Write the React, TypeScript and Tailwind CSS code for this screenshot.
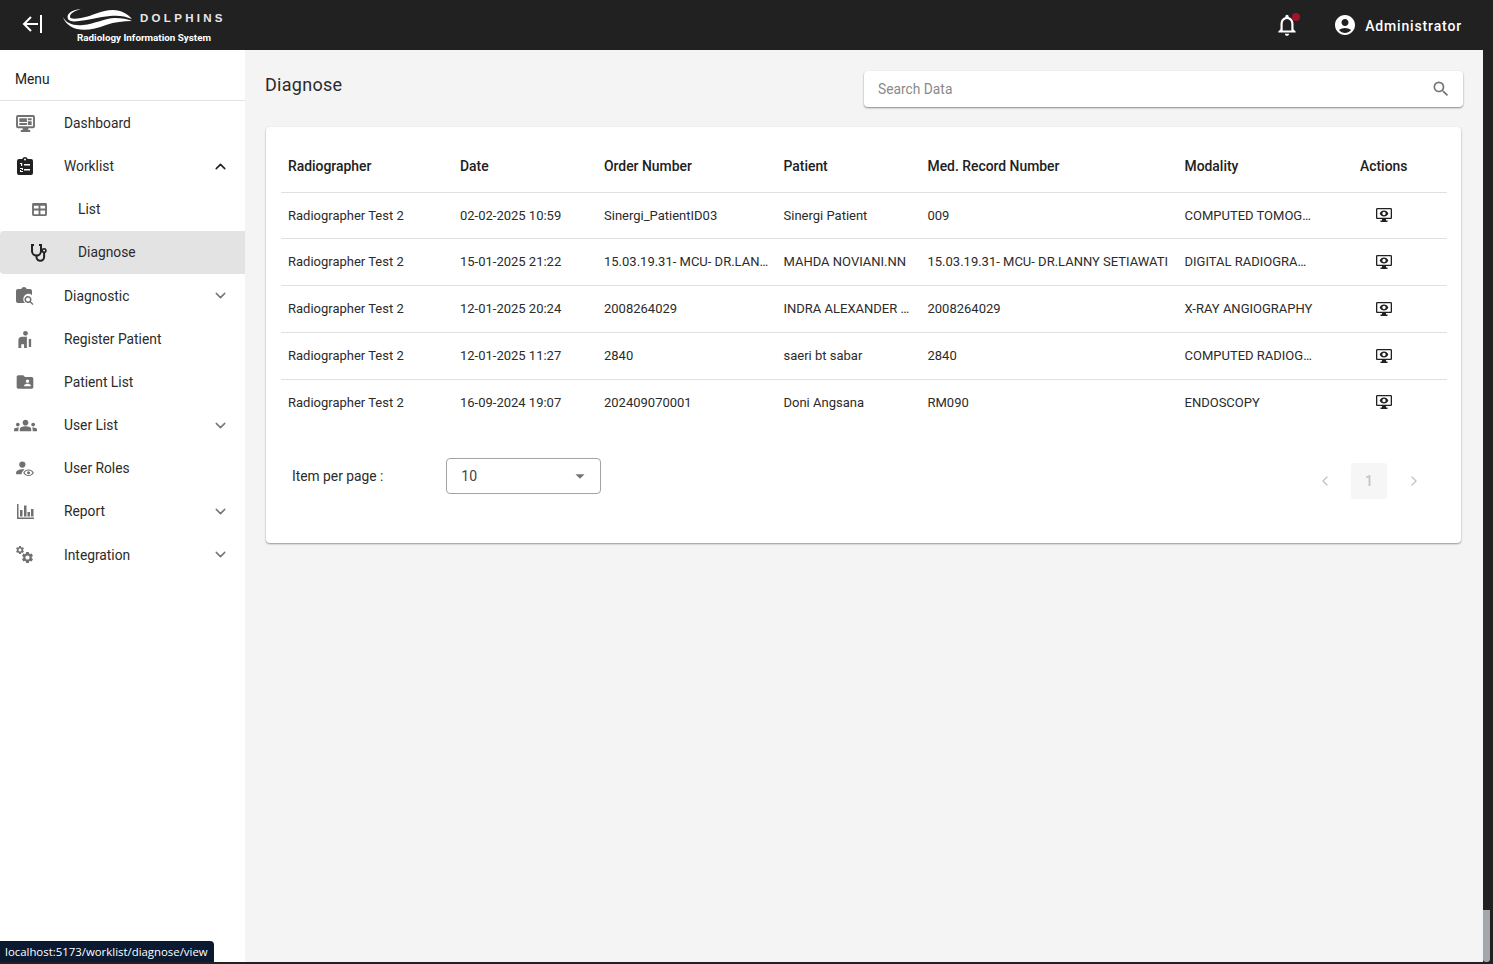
import { ChevronDown, ChevronLeft, ChevronRight, ChevronUp } from "lucide-react";
import {
  MdAccountCircle,
  MdArrowDropDown,
  MdFolderShared,
  MdGroups,
  MdNotificationsNone,
  MdSearch,
  MdSettings,
} from "react-icons/md";

type IconProps = { className?: string };

function DashboardIcon({ className }: IconProps) {
  return (
    <svg viewBox="0 0 20 18" className={className} fill="currentColor">
      <path d="M2 0h16a2 2 0 0 1 2 2v10a2 2 0 0 1-2 2h-5v2h2v2H5v-2h2v-2H2a2 2 0 0 1-2-2V2a2 2 0 0 1 2-2zm0 2v10h16V2H2z" />
      <path d="M3.500 3.500h8v4h-8zM12.500 3.500h4v2h-4zM12.500 6.500h4v4h-4zM3.500 8.500h8v2h-8z" />
    </svg>
  );
}

function WorklistIcon({ className }: IconProps) {
  return (
    <svg viewBox="0 0 16 18" className={className} fill="currentColor">
      <path
        fillRule="evenodd"
        d="M2 2h3.200a3 3 0 0 1 5.600 0H14a2 2 0 0 1 2 2v12a2 2 0 0 1-2 2H2a2 2 0 0 1-2-2V4a2 2 0 0 1 2-2zm6-.500a1 1 0 1 0 0 2 1 1 0 0 0 0-2zM3 6v1h1v2h1.200V6H3zm4 1v1.500h6V7H7zm-4 5h1.500a.500.500 0 0 1 0 1H3v2h3v-1H4.500a.500.500 0 0 1 0-1H6v-2H3v1zm4 0v1.500h6V12H7z"
      />
    </svg>
  );
}

function TableIcon({ className }: IconProps) {
  return (
    <svg viewBox="0 0 16 14" className={className} fill="currentColor">
      <path
        fillRule="evenodd"
        d="M1.500 0h13A1.500 1.500 0 0 1 16 1.500v11a1.500 1.500 0 0 1-1.500 1.500h-13A1.500 1.500 0 0 1 0 12.500v-11A1.500 1.500 0 0 1 1.500 0zM2 3v3h5V3H2zm7 0v3h5V3H9zM2 8v4h5V8H2zm7 0v4h5V8H9z"
      />
    </svg>
  );
}

function StethoscopeIcon({ className }: IconProps) {
  return (
    <svg viewBox="0 0 18 18" className={className} fill="none" stroke="currentColor" strokeWidth="2">
      <path d="M4 1H2v6a4.500 4.500 0 0 0 9 0V1H9" />
      <path d="M6.500 11.500V13a3.800 3.800 0 0 0 7.600 0V9" />
      <circle cx="14.100" cy="6.500" r="1.800" strokeWidth="1.600" />
    </svg>
  );
}

function DiagnosticIcon({ className }: IconProps) {
  return (
    <svg viewBox="0 0 18 18" className={className} fill="currentColor">
      <path d="M2 2h3.200a3 3 0 0 1 5.600 0H14a2 2 0 0 1 2 2v4.200a5 5 0 0 0-7 7.800H2a2 2 0 0 1-2-2V4a2 2 0 0 1 2-2z" />
      <path
        fillRule="evenodd"
        d="M12 9a3.500 3.500 0 0 1 2.900 5.400l2.600 2.600-1 1-2.600-2.600A3.500 3.500 0 1 1 12 9zm0 1.500a2 2 0 1 0 0 4 2 2 0 0 0 0-4z"
      />
    </svg>
  );
}

function RegisterIcon({ className }: IconProps) {
  return (
    <svg viewBox="0 0 14 18" className={className} fill="currentColor">
      <circle cx="7.500" cy="2.500" r="2.500" />
      <path d="M0 18v-8a4 4 0 0 1 4-4h5v12H6v-4H3v4zM11 8.500h2.500V17H11z" />
    </svg>
  );
}

function UserRolesIcon({ className }: IconProps) {
  return (
    <svg viewBox="0 0 20 18" className={className} fill="currentColor">
      <circle cx="7" cy="4" r="3.500" />
      <path d="M0 15v-2c0-2.200 3.500-3.800 7-3.800.900 0 1.800.100 2.600.300A8 8 0 0 0 6 15H0z" />
      <path
        fillRule="evenodd"
        d="M14 9.500c2.800 0 5 1.800 6 3.700-1 1.900-3.200 3.800-6 3.800s-5-1.900-6-3.800c1-1.900 3.200-3.700 6-3.700zm0 1.200c-1.900 0-3.500 1-4.400 2.500.900 1.500 2.500 2.600 4.400 2.600s3.500-1.100 4.400-2.600c-.900-1.500-2.500-2.500-4.400-2.500zm0 .800a1.700 1.700 0 1 1 0 3.400 1.700 1.700 0 0 1 0-3.400z"
      />
    </svg>
  );
}

function ReportIcon({ className }: IconProps) {
  return (
    <svg viewBox="0 0 17 15" className={className} fill="currentColor">
      <path d="M0 0h1.500v13.500H17V15H0z" />
      <path d="M3 6h2.500v6.500H3zM7 1.500h2.500v11H7zM10.500 8H13v4.500h-2.500zM14 5h2.500v7.500H14z" />
    </svg>
  );
}

function IntegrationIcon({ className }: IconProps) {
  return (
    <svg viewBox="0 0 18 18" className={className} fill="currentColor">
      <MdSettings x={-1} y={-1} size={10} />
      <MdSettings x={4.500} y={4.500} size={14} />
    </svg>
  );
}

function MonitorEyeIcon({ className }: IconProps) {
  return (
    <svg viewBox="0 0 16 14" className={className} fill="currentColor">
      <path
        fillRule="evenodd"
        d="M1.300 0h13.400C15.400 0 16 .600 16 1.300v8.400c0 .700-.600 1.300-1.300 1.300H10v1.500h1.500V14h-7v-1.500H6V11H1.300C.600 11 0 10.400 0 9.700V1.300C0 .600.600 0 1.300 0zm0 1.300v8.400h13.400V1.300H1.300z"
      />
      <path
        fillRule="evenodd"
        d="M8 2.500c2 0 3.600 1.300 4.300 3-.7 1.700-2.300 3-4.300 3s-3.600-1.300-4.300-3c.7-1.700 2.300-3 4.300-3zm0 1.300a1.700 1.700 0 1 0 0 3.400 1.700 1.700 0 0 0 0-3.400z"
      />
    </svg>
  );
}

function DolphinsLogo() {
  return (
    <div className="mt-[-2px] flex w-[162px] flex-col">
      <div className="flex h-[26px] items-end">
        <svg viewBox="0 0 70 22" className="h-[22px] w-[70px] shrink-0" fill="#fff">
          <path d="M5 10C3 5 8 1 18 0 12 2 7 4 7 8c0 2 5 2 11 1C30 7 38 1 50 1c8 0 15 4 19 9-7-3-14-4-22-3-11 1-21 4-31 5-6 1-10 0-11-2z" />
          <path d="M0 8c3 6 10 9 20 8 12-1 22-7 32-7 7 0 13 1 17 3-9 0-17 1-26 4-10 4-21 6-29 4C7 18 2 14 0 8z" />
        </svg>
        <span className="mb-[6px] ml-[7px] font-['Liberation_Sans',sans-serif] text-[11.500px] font-bold leading-none tracking-[3.300px] text-[#e8e8e8]">
          DOLPHINS
        </span>
      </div>
      <span className="mt-[1px] whitespace-nowrap pl-[14px] text-[9.850px] font-bold leading-[12px] text-white">
        Radiology Information System
      </span>
    </div>
  );
}

type NavItem = {
  label: string;
  icon: React.ReactNode;
  chevron?: "up" | "down";
  sub?: boolean;
  active?: boolean;
  dark?: boolean;
};

const iconClass = "h-[18px] w-[18px]";

const navItems: NavItem[] = [
  { label: "Dashboard", icon: <DashboardIcon className="h-[17px] w-[19px]" /> },
  { label: "Worklist", icon: <WorklistIcon className="h-[18px] w-[16px]" />, chevron: "up", dark: true },
  { label: "List", icon: <TableIcon className="h-[13px] w-[15px]" />, sub: true },
  { label: "Diagnose", icon: <StethoscopeIcon className={iconClass} />, sub: true, active: true, dark: true },
  { label: "Diagnostic", icon: <DiagnosticIcon className={iconClass} />, chevron: "down" },
  { label: "Register Patient", icon: <RegisterIcon className="h-[17px] w-[14px]" /> },
  { label: "Patient List", icon: <MdFolderShared className="h-[20px] w-[20px]" /> },
  { label: "User List", icon: <MdGroups className="h-[23px] w-[23px]" />, chevron: "down" },
  { label: "User Roles", icon: <UserRolesIcon className="h-[16px] w-[18px]" /> },
  { label: "Report", icon: <ReportIcon className="h-[15px] w-[17px]" />, chevron: "down" },
  { label: "Integration", icon: <IntegrationIcon className={iconClass} />, chevron: "down" },
];

const rows = [
  ["Radiographer Test 2", "02-02-2025 10:59", "Sinergi_PatientID03", "Sinergi Patient", "009", "COMPUTED TOMOGRAPHY"],
  ["Radiographer Test 2", "15-01-2025 21:22", "15.03.19.31- MCU- DR.LANNY SETIAWATI", "MAHDA NOVIANI.NN", "15.03.19.31- MCU- DR.LANNY SETIAWATI", "DIGITAL RADIOGRAPHY"],
  ["Radiographer Test 2", "12-01-2025 20:24", "2008264029", "INDRA ALEXANDER SAPUTRA", "2008264029", "X-RAY ANGIOGRAPHY"],
  ["Radiographer Test 2", "12-01-2025 11:27", "2840", "saeri bt sabar", "2840", "COMPUTED RADIOGRAPHY"],
  ["Radiographer Test 2", "16-09-2024 19:07", "202409070001", "Doni Angsana", "RM090", "ENDOSCOPY"],
];

const headers = ["Radiographer", "Date", "Order Number", "Patient", "Med. Record Number", "Modality"];

function Sidebar() {
  return (
    <aside className="flex w-[245px] shrink-0 flex-col bg-white">
      <div className="flex h-[51px] shrink-0 items-center border-b border-[#e2e2e2] pl-[15px] pt-[8px] text-[13.800px] text-[#212121]">
        Menu
      </div>
      <nav className="flex flex-col pt-[0.500px]">
        {navItems.map((item) => (
          <div
            key={item.label}
            className={
              item.active
                ? "flex h-[43.200px] items-center rounded-l-[4px] bg-[#e3e3e3] pr-[16px]"
                : "flex h-[43.200px] items-center pr-[16px]"
            }
          >
            <div
              className={
                (item.sub ? "ml-[27px] mr-[27px] " : "ml-[13px] mr-[27px] ") +
                (item.dark ? "flex w-[24px] justify-center text-[#212121]" : "flex w-[24px] justify-center text-[#707070]")
              }
            >
              {item.icon}
            </div>
            <span className="flex-1 text-[13.800px] text-[#2b2b2b]">{item.label}</span>
            {item.chevron === "up" && <ChevronUp className="h-[17px] w-[17px] text-[#212121]" strokeWidth={2.2} />}
            {item.chevron === "down" && <ChevronDown className="h-[17px] w-[17px] text-[#757575]" strokeWidth={2} />}
          </div>
        ))}
      </nav>
    </aside>
  );
}

function DataTable() {
  return (
    <table className="w-[1166px] table-fixed border-collapse text-left">
      <colgroup>
        <col className="w-[172px]" />
        <col className="w-[144px]" />
        <col className="w-[179.500px]" />
        <col className="w-[144px]" />
        <col className="w-[257px]" />
        <col className="w-[175.500px]" />
        <col className="w-[94px]" />
      </colgroup>
      <thead>
        <tr className="h-[65px] border-b border-[#e0e0e0]">
          {headers.map((h) => (
            <th key={h} className="whitespace-nowrap px-[7px] pt-[15px] text-[13.900px] font-medium text-[#212121]">
              {h}
            </th>
          ))}
          <th className="px-[7px] pt-[15px] text-[13.900px] font-medium text-[#212121]">Actions</th>
        </tr>
      </thead>
      <tbody>
        {rows.map((row, i) => (
          <tr key={row[1]} className={i < rows.length - 1 ? "h-[46.750px] border-b border-[#e0e0e0]" : "h-[46px]"}>
            {row.map((cell, j) => (
              <td
                key={j}
                className={
                  j === 5
                    ? "truncate pl-[7px] pr-[39px] text-[13px] text-[#2b2b2b]"
                    : "truncate px-[7px] text-[13px] text-[#2b2b2b]"
                }
              >
                {cell}
              </td>
            ))}
            <td className="px-[7px]">
              <div className="flex w-[48px] justify-center text-[#212121]">
                <MonitorEyeIcon className="h-[14px] w-[16px]" />
              </div>
            </td>
          </tr>
        ))}
      </tbody>
    </table>
  );
}

export default function App() {
  return (
    <div className="relative flex h-[964px] w-[1493px] overflow-hidden bg-[#212121] font-['Roboto',sans-serif]">
      <div className="flex h-[962px] w-[1483px] shrink-0 flex-col">
        {/* Top bar */}
        <header className="flex h-[50px] shrink-0 items-center bg-[#212121] pl-[22px] pr-[21px] text-white">
          <svg viewBox="0 0 20 20" className="mb-[2px] h-[20px] w-[20px]" fill="none" stroke="#fff" strokeWidth="2">
            <path d="M19 1v18M16 10H2M9 3l-7 7 7 7" />
          </svg>
          <div className="ml-[21px]">
            <DolphinsLogo />
          </div>
          <div className="ml-auto flex items-center">
            <div className="relative">
              <MdNotificationsNone className="h-[26px] w-[26px]" />
              <span className="absolute right-0 top-[1px] h-[8px] w-[8px] rounded-full bg-[#a11327]" />
            </div>
            <MdAccountCircle className="ml-[33px] h-[24px] w-[24px]" />
            <span className="ml-[8px] mt-[2px] text-[14px] font-medium tracking-[0.850px]">Administrator</span>
          </div>
        </header>

        <div className="flex min-h-0 flex-1">
          <Sidebar />
          <main className="flex-1 bg-[#f4f4f4] pl-[20px] pr-[20px]">
            <div className="flex h-[77px] items-start justify-between">
              <h1 className="mt-[23px] text-[18px] leading-[24px] tracking-[0.280px] text-[#2b2b2b]">Diagnose</h1>
              <div className="mt-[21px] flex h-[36px] w-[599px] items-center justify-between rounded-[4px] bg-white pl-[14px] pr-[12px] shadow-[0_1px_2px_rgba(0,0,0,0.45)]">
                <span className="text-[13.800px] text-[#8a8a8a]">Search Data</span>
                <MdSearch className="h-[20px] w-[20px] text-[#757575]" />
              </div>
            </div>

            <section className="ml-[1px] mr-[2px] h-[416px] rounded-[4px] bg-white pl-[15px] pr-[14px] shadow-[0_1px_2px_rgba(0,0,0,0.4)]">
              <DataTable />
              <div className="flex items-start">
                <span className="ml-[11px] mt-[41px] text-[13.800px] text-[#2b2b2b]">Item per page :</span>
                <div className="ml-[63px] mt-[33px] flex h-[36px] w-[155px] items-center justify-between rounded-[4px] border border-[#a3a3a3] pl-[14px] pr-[9px] text-[14px] text-[#444444]">
                  10
                  <MdArrowDropDown className="h-[22px] w-[22px] text-[#757575]" />
                </div>
                <div className="ml-auto mr-[25px] mt-[38px] flex items-center text-[#c4c4c4]">
                  <ChevronLeft className="h-[16px] w-[16px]" />
                  <span className="ml-[18px] mr-[19px] flex h-[36px] w-[36px] items-center justify-center rounded-[3px] bg-[#f6f6f6] text-[14px] font-medium">
                    1
                  </span>
                  <ChevronRight className="h-[16px] w-[16px]" />
                </div>
              </div>
            </section>
          </main>
        </div>
      </div>

      {/* Browser scrollbar */}
      <div className="flex h-[962px] w-[7px] shrink-0 flex-col justify-end bg-[#212121]">
        <div className="h-[52px] rounded-b-[3px] bg-[#a3a7a9]" />
      </div>

      {/* Browser link status */}
      <div className="absolute bottom-[2px] left-0 flex h-[21px] w-[214px] items-center whitespace-nowrap rounded-tr-[4px] bg-[#0b1a30] pl-[5px] font-['Open_Sans',sans-serif] text-[11.400px] text-white">
        localhost:5173/worklist/diagnose/view
      </div>
    </div>
  );
}
